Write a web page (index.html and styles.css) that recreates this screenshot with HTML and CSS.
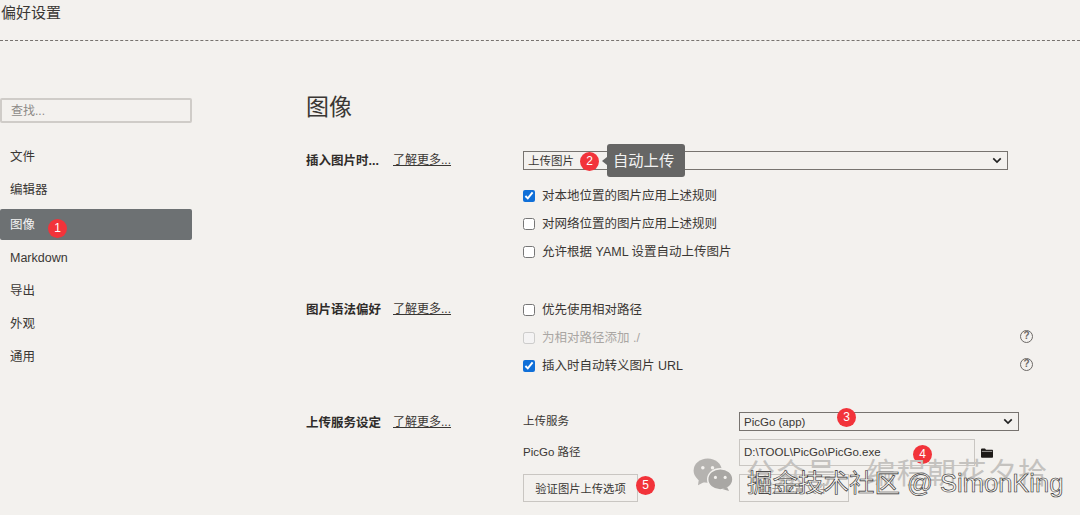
FILE: index.html
```html
<!DOCTYPE html>
<html lang="zh-CN">
<head>
  <meta charset="UTF-8">
  <title>偏好设置</title>
  <link rel="stylesheet" href="styles.css">
</head>
<body>
  <header class="titlebar">偏好设置</header>

  <div class="layout">
    <aside class="sidebar">
      <input class="search" type="text" placeholder="查找...">
      <nav class="nav">
        <div class="nav-item">文件</div>
        <div class="nav-item">编辑器</div>
        <div class="nav-item active">图像<span class="badge badge-nav">1</span></div>
        <div class="nav-item">Markdown</div>
        <div class="nav-item">导出</div>
        <div class="nav-item">外观</div>
        <div class="nav-item">通用</div>
      </nav>
    </aside>

    <main class="content">
      <h1 class="page-title">图像</h1>

      <section class="group group-insert">
        <div class="group-label"><b>插入图片时...</b><a class="more">了解更多...</a></div>
        <div class="group-body">
          <div class="select select-wide">
            <span>上传图片</span>
            <svg class="chevron" viewBox="0 0 12 8"><path d="M1.5 1.5 6 6l4.5-4.5" fill="none" stroke="#222" stroke-width="2"/></svg>
            <span class="badge badge-two">2</span>
            <span class="tip">自动上传</span>
          </div>
          <label class="check"><input type="checkbox" checked>对本地位置的图片应用上述规则</label>
          <label class="check"><input type="checkbox">对网络位置的图片应用上述规则</label>
          <label class="check"><input type="checkbox">允许根据 YAML 设置自动上传图片</label>
        </div>
      </section>

      <section class="group group-syntax">
        <div class="group-label"><b>图片语法偏好</b><a class="more">了解更多...</a></div>
        <div class="group-body">
          <label class="check"><input type="checkbox">优先使用相对路径</label>
          <label class="check disabled"><input type="checkbox" disabled>为相对路径添加 ./<span class="help">?</span></label>
          <label class="check"><input type="checkbox" checked>插入时自动转义图片 URL<span class="help">?</span></label>
        </div>
      </section>

      <section class="group group-upload">
        <div class="group-label"><b>上传服务设定</b><a class="more">了解更多...</a></div>
        <div class="group-body">
          <div class="field">
            <span class="field-name">上传服务</span>
            <div class="select select-service">
              <span>PicGo (app)</span>
              <svg class="chevron" viewBox="0 0 12 8"><path d="M1.5 1.5 6 6l4.5-4.5" fill="none" stroke="#222" stroke-width="2"/></svg>
              <span class="badge badge-three">3</span>
            </div>
          </div>
          <div class="field field-path">
            <span class="field-name">PicGo 路径</span>
            <div class="path-box">D:\TOOL\PicGo\PicGo.exe<span class="badge badge-four">4</span></div>
            <svg class="folder" viewBox="0 0 12 10"><path d="M0 1.5C0 1 .4.6 1 .6h3l1 1.2h6c.5 0 1 .4 1 1V9c0 .4-.4.8-1 .8H1c-.6 0-1-.4-1-.8z" fill="#1d1a18"/><path d="M.8 3.4h10.4" stroke="#f3f1ee" stroke-width=".6"/></svg>
          </div>
          <div class="field field-buttons">
            <button class="btn btn-check">验证图片上传选项<span class="badge badge-five">5</span></button>
            <button class="btn btn-open">打开配置文件</button>
          </div>
        </div>
      </section>
    </main>
  </div>

  <!-- 水印 -->
  <div class="mark">
    <svg class="mark-icon" viewBox="0 0 42 34">
      <ellipse cx="15" cy="13" rx="14.5" ry="12.5" fill="#b5b3b0"/>
      <path d="M6 21 5 28l8-4z" fill="#b5b3b0"/>
      <ellipse cx="28" cy="22" rx="13" ry="11" fill="#a9a7a4" stroke="#f3f1ee" stroke-width="1.5"/>
      <path d="M35 30l2 4-7-2z" fill="#a9a7a4"/>
      <circle cx="10" cy="10" r="1.8" fill="#f3f1ee"/><circle cx="20" cy="10" r="1.8" fill="#f3f1ee"/>
      <circle cx="23" cy="20" r="1.6" fill="#f3f1ee"/><circle cx="33" cy="20" r="1.6" fill="#f3f1ee"/>
    </svg>
    <span class="mark-text">公众号 · 编程朝花夕拾</span>
  </div>
  <div class="mark-site">掘金技术社区 @ SimonKing</div>
</body>
</html>
```

FILE: styles.css
```css
* {
  box-sizing: border-box;
}

html, body {
  height: 100%;
}

body {
  margin: 0;
  overflow: hidden;
  position: relative;
  background: #f3f1ee;
  color: #3a3734;
  font-family: "Liberation Sans", "Noto Sans CJK SC", sans-serif;
  font-size: 12.5px;
}

.titlebar {
  height: 41px;
  padding: 3px 0 0 1px;
  font-size: 15px;
  line-height: 20px;
  border-bottom: 1px dashed #77736f;
}

.layout {
  display: flex;
}

/* 左侧 */
.sidebar {
  width: 192px;
  padding-top: 57px;
  flex: none;
}

.search {
  display: block;
  width: 100%;
  height: 25px;
  padding: 0 9px;
  background: #f3f1ee;
  border: 2px solid #cfccc8;
  border-radius: 2px;
  font: inherit;
  font-size: 12px;
  outline: none;
}

.search::placeholder {
  color: #8d8a87;
}

.nav {
  margin-top: 18px;
}

.nav-item {
  position: relative;
  height: 33px;
  padding-left: 10px;
  line-height: 33px;
}

.nav-item.active {
  height: 31px;
  margin: 2px 0;
  line-height: 33px;
  background: #6d7173;
  border-radius: 2px;
  color: #f5f5f5;
}

/* 右侧 */
.content {
  margin-left: 114px;
  flex: 1;
  padding-right: 47px;
}

.page-title {
  margin: 0;
  padding-top: 51px;
  height: 110px;
  font-size: 23px;
  font-weight: 400;
  line-height: 30px;
}

.group {
  display: flex;
}

.group-label {
  width: 216px;
  flex: none;
  display: flex;
  font-size: 12px;
}

.group-label b {
  width: 87px;
  flex: none;
  color: #2f2c2a;
  font-size: 12.5px;
}

.more {
  color: #3a3734;
  text-decoration: underline;
}

.group-body {
  flex: 1;
}

.group-insert .group-label {
  margin-top: -1px;
}

.group-syntax {
  margin-top: 30px;
}

.group-syntax .group-label {
  padding-top: 5px;
}

.group-upload {
  margin-top: 34px;
}

.select {
  position: relative;
  display: flex;
  justify-content: space-between;
  align-items: center;
  background: #f3f1ee;
  border: 1px solid #77736f;
  font-size: 11.5px;
}

.select-wide {
  width: 485px;
  height: 19px;
  margin: 0 0 10px 1px;
  padding: 0 5px 1px 4px;
}

.chevron {
  width: 10px;
  height: 7px;
}

.check {
  display: flex;
  align-items: center;
  position: relative;
  height: 28px;
  font-size: 12.5px;
}

.check input {
  width: 12px;
  height: 12px;
  margin: 4px 7px 0 1px;
  accent-color: #0f6fd8;
}

.disabled {
  color: #a9a6a3;
}

.help {
  position: absolute;
  right: 0;
  top: 8px;
  width: 13px;
  height: 13px;
  border: 1.5px solid #6c6966;
  border-radius: 50%;
  color: #6c6966;
  font-size: 10px;
  font-weight: 700;
  line-height: 10px;
  text-align: center;
}

.field {
  display: flex;
  align-items: center;
  font-size: 11.5px;
}

.field-name {
  width: 217px;
  flex: none;
  margin-top: -4px;
  padding-left: 1px;
}

.select-service {
  width: 280px;
  height: 19px;
  padding: 0 5px 0 4px;
}

.field-path {
  margin-top: 8px;
}

.path-box {
  position: relative;
  width: 236px;
  height: 27px;
  padding-left: 4px;
  line-height: 25px;
  border: 1px solid #c9c6c2;
}

.folder {
  width: 12px;
  height: 10px;
  margin-left: 6px;
}

.field-buttons {
  margin: 8px 0 0 1px;
  gap: 101px;
}

.btn {
  position: relative;
  height: 28px;
  padding: 0;
  background: #f3f1ee;
  border: 1px solid #c9c6c2;
  color: #3a3734;
  font: inherit;
  font-size: 11.3px;
}

.btn-check {
  width: 115px;
}

.btn-open {
  width: 110px;
  color: #8b8885;
}

/* 标注 */
.badge {
  position: absolute;
  width: 19px;
  height: 19px;
  border-radius: 50%;
  background: #f2333a;
  color: #fff;
  font-size: 12px;
  line-height: 19px;
  text-align: center;
}

.badge-nav {
  left: 48px;
  top: 10px;
}

.badge-two {
  left: 56px;
  top: 0;
}

.badge-three {
  left: 97px;
  top: -5px;
}

.badge-four {
  left: 173px;
  top: 5px;
}

.badge-five {
  left: 112px;
  top: 1px;
}

.tip {
  position: absolute;
  left: 83px;
  top: -8px;
  width: 78px;
  height: 33px;
  padding-left: 6px;
  background: #666665;
  border-radius: 3px;
  color: #f2f2f2;
  font-size: 15.3px;
  line-height: 33px;
}

.tip::before {
  content: '';
  position: absolute;
  left: -5px;
  top: 13px;
  border: 4px solid transparent;
  border-left: 0;
  border-right: 5px solid #666665;
}

/* 水印 */
.mark {
  position: absolute;
  left: 693px;
  top: 454px;
  display: flex;
  align-items: center;
  gap: 12px;
}

.mark-icon {
  width: 41px;
  height: 33px;
}

.mark-text {
  color: #c4c2bf;
  font-size: 29px;
  letter-spacing: 1.3px;
  line-height: 40px;
  white-space: nowrap;
}

.mark-site {
  position: absolute;
  left: 747px;
  top: 468px;
  color: #f5f4f2;
  font-size: 25.5px;
  line-height: 30px;
  white-space: nowrap;
  -webkit-text-stroke: 0.6px #2a2826;
}
```
